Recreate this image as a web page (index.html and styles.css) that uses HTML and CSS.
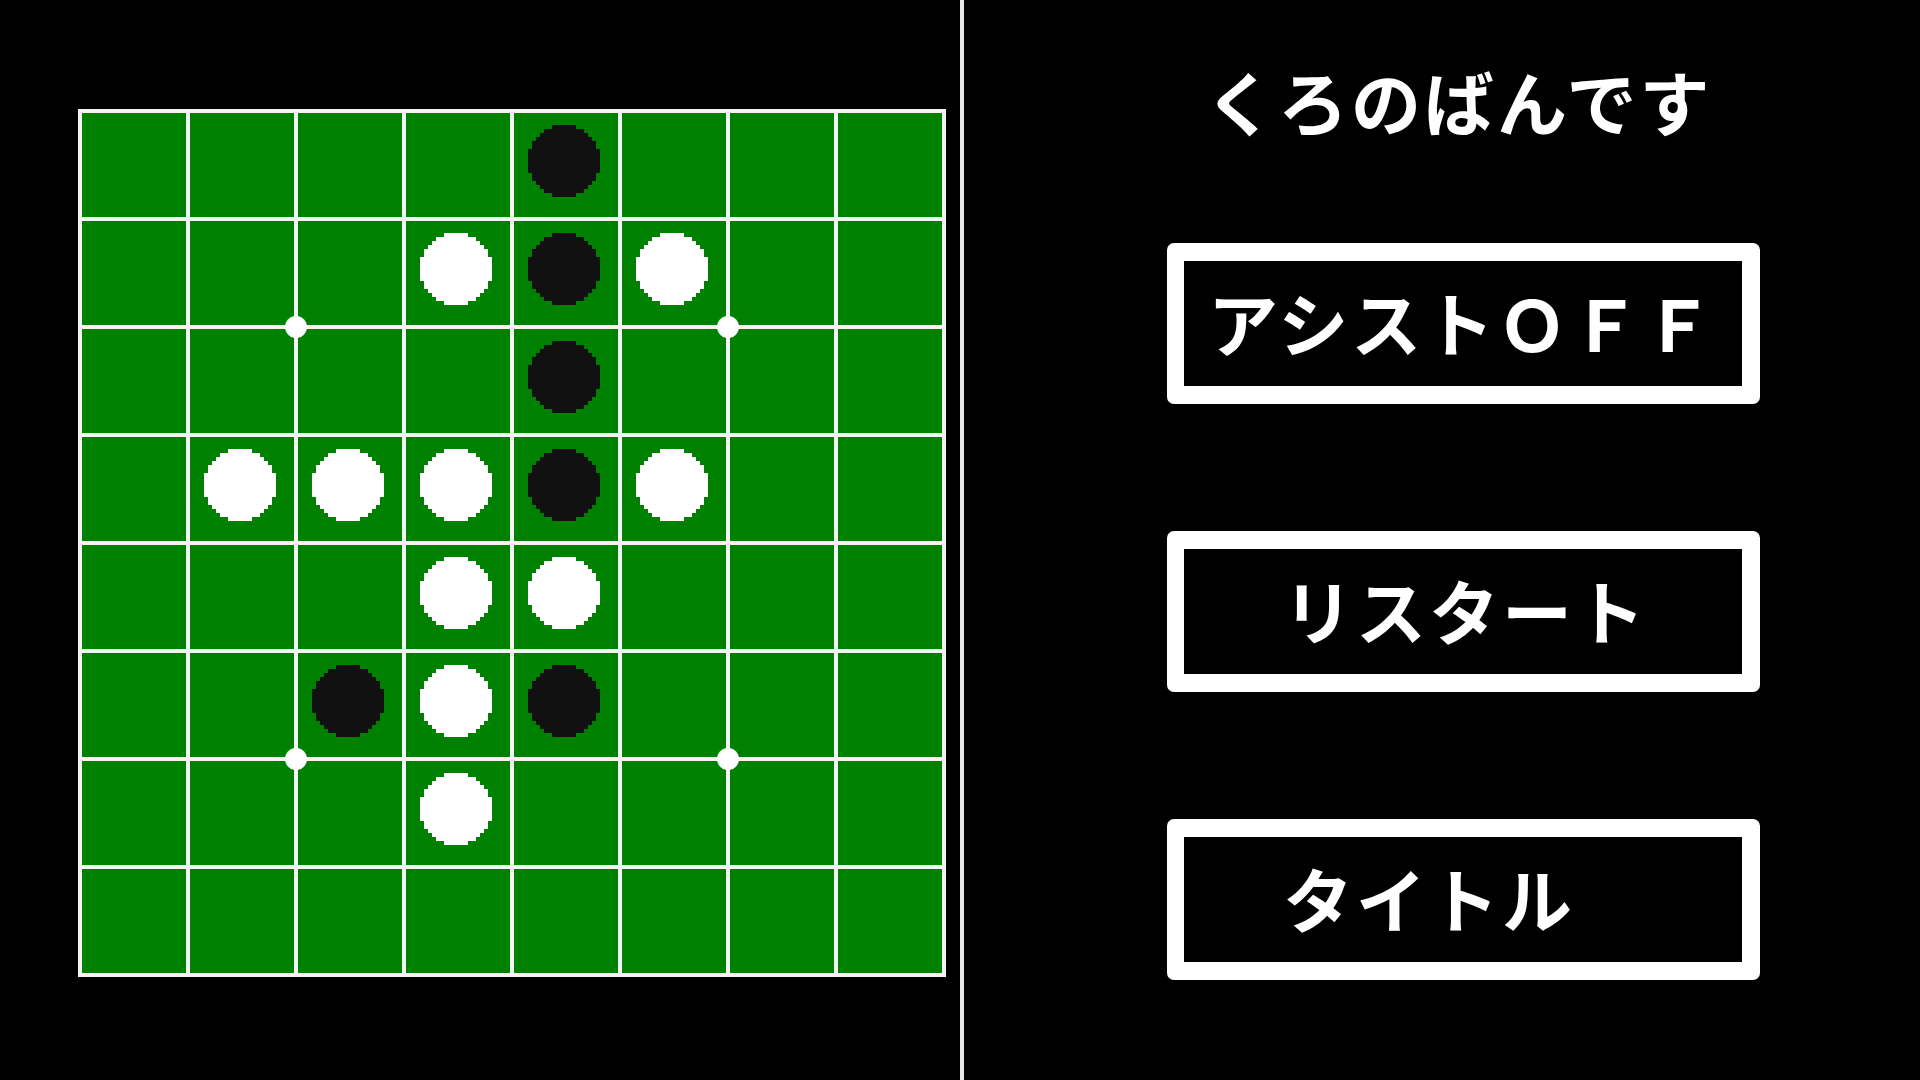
FILE: index.html
```html
<!DOCTYPE html>
<html lang="ja">
<head>
<meta charset="utf-8">
<title>リバーシ</title>
<link rel="stylesheet" href="styles.css">
</head>
<body>
<main class="screen">
  <section class="play-area">
    <div class="board">
      <div class="cell"></div><div class="cell"></div><div class="cell"></div><div class="cell"></div>
      <div class="cell"><svg class="disc black" viewBox="0 0 18 18"><path d="M6 0H12V1H14V2H15V3H16V4H17V6H18V12H17V14H16V15H15V16H14V17H12V18H6V17H4V16H3V15H2V14H1V12H0V6H1V4H2V3H3V2H4V1H6Z"/></svg></div>
      <div class="cell"></div><div class="cell"></div><div class="cell"></div>

      <div class="cell"></div><div class="cell"></div><div class="cell"></div>
      <div class="cell"><svg class="disc white" viewBox="0 0 18 18"><path d="M6 0H12V1H14V2H15V3H16V4H17V6H18V12H17V14H16V15H15V16H14V17H12V18H6V17H4V16H3V15H2V14H1V12H0V6H1V4H2V3H3V2H4V1H6Z"/></svg></div>
      <div class="cell"><svg class="disc black" viewBox="0 0 18 18"><path d="M6 0H12V1H14V2H15V3H16V4H17V6H18V12H17V14H16V15H15V16H14V17H12V18H6V17H4V16H3V15H2V14H1V12H0V6H1V4H2V3H3V2H4V1H6Z"/></svg></div>
      <div class="cell"><svg class="disc white" viewBox="0 0 18 18"><path d="M6 0H12V1H14V2H15V3H16V4H17V6H18V12H17V14H16V15H15V16H14V17H12V18H6V17H4V16H3V15H2V14H1V12H0V6H1V4H2V3H3V2H4V1H6Z"/></svg></div>
      <div class="cell"></div><div class="cell"></div>

      <div class="cell"></div><div class="cell"></div><div class="cell"></div><div class="cell"></div>
      <div class="cell"><svg class="disc black" viewBox="0 0 18 18"><path d="M6 0H12V1H14V2H15V3H16V4H17V6H18V12H17V14H16V15H15V16H14V17H12V18H6V17H4V16H3V15H2V14H1V12H0V6H1V4H2V3H3V2H4V1H6Z"/></svg></div>
      <div class="cell"></div><div class="cell"></div><div class="cell"></div>

      <div class="cell"></div>
      <div class="cell"><svg class="disc white" viewBox="0 0 18 18"><path d="M6 0H12V1H14V2H15V3H16V4H17V6H18V12H17V14H16V15H15V16H14V17H12V18H6V17H4V16H3V15H2V14H1V12H0V6H1V4H2V3H3V2H4V1H6Z"/></svg></div>
      <div class="cell"><svg class="disc white" viewBox="0 0 18 18"><path d="M6 0H12V1H14V2H15V3H16V4H17V6H18V12H17V14H16V15H15V16H14V17H12V18H6V17H4V16H3V15H2V14H1V12H0V6H1V4H2V3H3V2H4V1H6Z"/></svg></div>
      <div class="cell"><svg class="disc white" viewBox="0 0 18 18"><path d="M6 0H12V1H14V2H15V3H16V4H17V6H18V12H17V14H16V15H15V16H14V17H12V18H6V17H4V16H3V15H2V14H1V12H0V6H1V4H2V3H3V2H4V1H6Z"/></svg></div>
      <div class="cell"><svg class="disc black" viewBox="0 0 18 18"><path d="M6 0H12V1H14V2H15V3H16V4H17V6H18V12H17V14H16V15H15V16H14V17H12V18H6V17H4V16H3V15H2V14H1V12H0V6H1V4H2V3H3V2H4V1H6Z"/></svg></div>
      <div class="cell"><svg class="disc white" viewBox="0 0 18 18"><path d="M6 0H12V1H14V2H15V3H16V4H17V6H18V12H17V14H16V15H15V16H14V17H12V18H6V17H4V16H3V15H2V14H1V12H0V6H1V4H2V3H3V2H4V1H6Z"/></svg></div>
      <div class="cell"></div><div class="cell"></div>

      <div class="cell"></div><div class="cell"></div><div class="cell"></div>
      <div class="cell"><svg class="disc white" viewBox="0 0 18 18"><path d="M6 0H12V1H14V2H15V3H16V4H17V6H18V12H17V14H16V15H15V16H14V17H12V18H6V17H4V16H3V15H2V14H1V12H0V6H1V4H2V3H3V2H4V1H6Z"/></svg></div>
      <div class="cell"><svg class="disc white" viewBox="0 0 18 18"><path d="M6 0H12V1H14V2H15V3H16V4H17V6H18V12H17V14H16V15H15V16H14V17H12V18H6V17H4V16H3V15H2V14H1V12H0V6H1V4H2V3H3V2H4V1H6Z"/></svg></div>
      <div class="cell"></div><div class="cell"></div><div class="cell"></div>

      <div class="cell"></div><div class="cell"></div>
      <div class="cell"><svg class="disc black" viewBox="0 0 18 18"><path d="M6 0H12V1H14V2H15V3H16V4H17V6H18V12H17V14H16V15H15V16H14V17H12V18H6V17H4V16H3V15H2V14H1V12H0V6H1V4H2V3H3V2H4V1H6Z"/></svg></div>
      <div class="cell"><svg class="disc white" viewBox="0 0 18 18"><path d="M6 0H12V1H14V2H15V3H16V4H17V6H18V12H17V14H16V15H15V16H14V17H12V18H6V17H4V16H3V15H2V14H1V12H0V6H1V4H2V3H3V2H4V1H6Z"/></svg></div>
      <div class="cell"><svg class="disc black" viewBox="0 0 18 18"><path d="M6 0H12V1H14V2H15V3H16V4H17V6H18V12H17V14H16V15H15V16H14V17H12V18H6V17H4V16H3V15H2V14H1V12H0V6H1V4H2V3H3V2H4V1H6Z"/></svg></div>
      <div class="cell"></div><div class="cell"></div><div class="cell"></div>

      <div class="cell"></div><div class="cell"></div><div class="cell"></div>
      <div class="cell"><svg class="disc white" viewBox="0 0 18 18"><path d="M6 0H12V1H14V2H15V3H16V4H17V6H18V12H17V14H16V15H15V16H14V17H12V18H6V17H4V16H3V15H2V14H1V12H0V6H1V4H2V3H3V2H4V1H6Z"/></svg></div>
      <div class="cell"></div><div class="cell"></div><div class="cell"></div><div class="cell"></div>

      <div class="cell"></div><div class="cell"></div><div class="cell"></div><div class="cell"></div>
      <div class="cell"></div><div class="cell"></div><div class="cell"></div><div class="cell"></div>

      <span class="star s-tl"></span>
      <span class="star s-tr"></span>
      <span class="star s-bl"></span>
      <span class="star s-br"></span>
    </div>
  </section>

  <div class="divider"></div>

  <section class="side">
    <h1 class="turn">くろのばんです</h1>
    <button class="menu-btn">アシストＯＦＦ</button>
    <button class="menu-btn indent">リスタート</button>
    <button class="menu-btn indent">タイトル</button>
  </section>
</main>
</body>
</html>
```

FILE: styles.css
```css
html, body {
  margin: 0;
  padding: 0;
  background: #000;
}

body {
  width: 1920px;
  height: 1080px;
  overflow: hidden;
  color: #fff;
  font-family: "Noto Sans CJK JP", "Noto Sans", sans-serif;
}

.screen {
  display: flex;
  width: 1920px;
  height: 1080px;
}

/* ---- left: board ---- */
.play-area {
  width: 960px;
  flex: none;
  padding: 109px 0 0 78px;
  box-sizing: border-box;
}

.board {
  position: relative;
  display: grid;
  grid-template-columns: repeat(8, 104px);
  grid-template-rows: repeat(8, 104px);
  gap: 4px;
  padding: 4px;
  width: max-content;
  background: #f4f4f4;
}

.cell {
  background: #008000;
  display: flex;
  align-items: center;
  justify-content: center;
}

.disc {
  width: 72px;
  height: 72px;
  display: block;
  margin: -8px 0 0 -4px;
  shape-rendering: crispEdges;
}

.disc.black { fill: #111; }
.disc.white { fill: #fff; }

/* board star points at line crossings */
.star {
  position: absolute;
  width: 22px;
  height: 22px;
  border-radius: 50%;
  background: #fff;
  transform: translate(-50%, -50%);
}

.s-tl { left: 218px; top: 218px; }
.s-tr { left: 650px; top: 218px; }
.s-bl { left: 218px; top: 650px; }
.s-br { left: 650px; top: 650px; }

.divider {
  width: 4px;
  flex: none;
  background: #e8e8e8;
}

/* ---- right: status and menu ---- */
.side {
  flex: 1;
  display: flex;
  flex-direction: column;
  align-items: flex-start;
  padding: 66px 0 0 203px;
  box-sizing: border-box;
}

.turn {
  margin: 0 0 0 38px;
  font-size: 70px;
  line-height: 70px;
  font-weight: 700;
  letter-spacing: 3px;
  white-space: nowrap;
}

.menu-btn {
  width: 593px;
  height: 161px;
  margin-top: 107px;
  border: 17px solid #fff;
  border-width: 18px 18px 18px 17px;
  border-radius: 7px;
  background: #000;
  color: #fff;
  font-family: inherit;
  font-size: 70px;
  font-weight: 700;
  line-height: 70px;
  letter-spacing: 3px;
  text-align: left;
  padding: 0 0 4px 24px;
  box-sizing: border-box;
  display: flex;
  align-items: center;
  white-space: nowrap;
}

.menu-btn + .menu-btn {
  margin-top: 127px;
}

.menu-btn.indent {
  padding-left: 99px;
}
```
